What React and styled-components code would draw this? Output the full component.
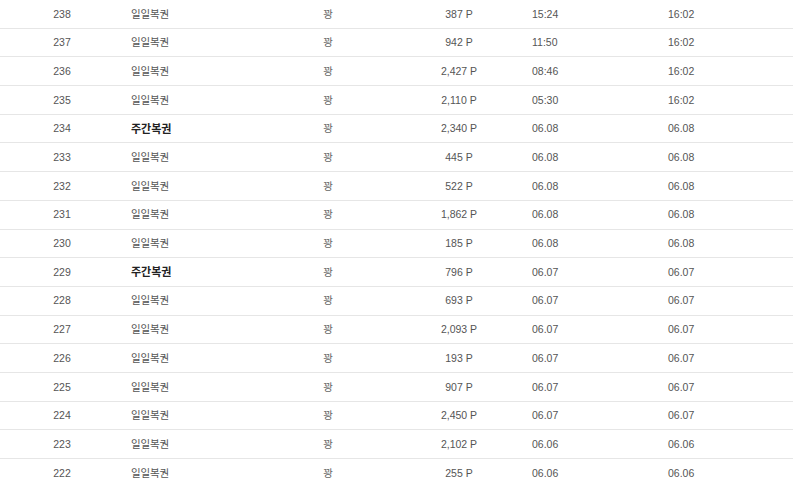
import React from "react";
import styled, { createGlobalStyle } from "styled-components";

const Global = createGlobalStyle`
  html, body { margin: 0; padding: 0; background: #fff; }
  body { font-family: "Liberation Sans", "Noto Sans CJK KR", sans-serif; }
`;

const Table = styled.div`
  width: 793px;
  display: flex;
  flex-direction: column;
`;

const Row = styled.div`
  display: grid;
  grid-template-columns: 124px 146px 116px 146px 136px 1fr;
  align-items: center;
  height: 28.7px;
  box-sizing: border-box;
  border-bottom: 1px solid #e6e6e6;
  font-size: 10.5px;
  color: #555;
`;

const Cell = styled.div`
  text-align: ${(p) => p.$align || "center"};
  padding-left: ${(p) => p.$pl || 0}px;
  white-space: nowrap;
  line-height: 1;
`;

const Name = styled.span`
  font-family: "Noto Sans CJK KR", sans-serif;
  font-size: ${(p) => (p.$bold ? "11px" : "10.5px")};
  letter-spacing: ${(p) => (p.$bold ? "0" : "-0.2px")};
  color: ${(p) => (p.$bold ? "#222" : "#555")};
  font-weight: ${(p) => (p.$bold ? 700 : 400)};
`;

const Result = styled.span`
  font-family: "Noto Sans CJK KR", sans-serif;
  font-size: 10.5px;
  color: #666;
`;

const rows = [
  [238, "일일복권", "387 P", "15:24", "16:02"],
  [237, "일일복권", "942 P", "11:50", "16:02"],
  [236, "일일복권", "2,427 P", "08:46", "16:02"],
  [235, "일일복권", "2,110 P", "05:30", "16:02"],
  [234, "주간복권", "2,340 P", "06.08", "06.08"],
  [233, "일일복권", "445 P", "06.08", "06.08"],
  [232, "일일복권", "522 P", "06.08", "06.08"],
  [231, "일일복권", "1,862 P", "06.08", "06.08"],
  [230, "일일복권", "185 P", "06.08", "06.08"],
  [229, "주간복권", "796 P", "06.07", "06.07"],
  [228, "일일복권", "693 P", "06.07", "06.07"],
  [227, "일일복권", "2,093 P", "06.07", "06.07"],
  [226, "일일복권", "193 P", "06.07", "06.07"],
  [225, "일일복권", "907 P", "06.07", "06.07"],
  [224, "일일복권", "2,450 P", "06.07", "06.07"],
  [223, "일일복권", "2,102 P", "06.06", "06.06"],
  [222, "일일복권", "255 P", "06.06", "06.06"],
];

export default function App() {
  return (
    <>
      <Global />
      <Table>
        {rows.map(([n, name, pt, t1, t2]) => (
          <Row key={n}>
            <Cell>{n}</Cell>
            <Cell $align="left" $pl={7}>
              <Name $bold={name === "주간복권"}>{name}</Name>
            </Cell>
            <Cell>
              <Result>꽝</Result>
            </Cell>
            <Cell>{pt}</Cell>
            <Cell $align="left">{t1}</Cell>
            <Cell $align="left">{t2}</Cell>
          </Row>
        ))}
      </Table>
    </>
  );
}
